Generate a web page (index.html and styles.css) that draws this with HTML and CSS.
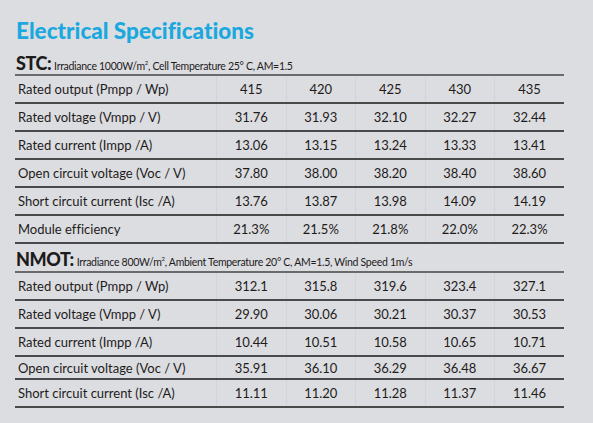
FILE: index.html
```html
<!DOCTYPE html>
<html lang="en">
<head>
  <meta charset="UTF-8" />
  <title>Electrical Specifications</title>
  <link rel="stylesheet" href="styles.css">
</head>
<body>
  <h1 class="title">Electrical Specifications</h1>

  <div class="cond"><b>STC:</b> <span>Irradiance 1000W/m<sup>2</sup>, Cell Temperature 25° C, AM=1.5</span></div>
  <table class="spec">
    <tr><td>Rated output (Pmpp / Wp)</td><td>415</td><td>420</td><td>425</td><td>430</td><td>435</td></tr>
    <tr><td>Rated voltage (Vmpp / V)</td><td>31.76</td><td>31.93</td><td>32.10</td><td>32.27</td><td>32.44</td></tr>
    <tr><td>Rated current (Impp /A)</td><td>13.06</td><td>13.15</td><td>13.24</td><td>13.33</td><td>13.41</td></tr>
    <tr><td>Open circuit voltage (Voc / V)</td><td>37.80</td><td>38.00</td><td>38.20</td><td>38.40</td><td>38.60</td></tr>
    <tr><td>Short circuit current (Isc /A)</td><td>13.76</td><td>13.87</td><td>13.98</td><td>14.09</td><td>14.19</td></tr>
    <tr><td>Module efficiency</td><td>21.3%</td><td>21.5%</td><td>21.8%</td><td>22.0%</td><td>22.3%</td></tr>
  </table>

  <div class="cond cond-2"><b>NMOT:</b> <span>Irradiance 800W/m<sup>2</sup>, Ambient Temperature 20° C, AM=1.5, Wind Speed 1m/s</span></div>
  <table class="spec">
    <tr><td>Rated output (Pmpp / Wp)</td><td>312.1</td><td>315.8</td><td>319.6</td><td>323.4</td><td>327.1</td></tr>
    <tr><td>Rated voltage (Vmpp / V)</td><td>29.90</td><td>30.06</td><td>30.21</td><td>30.37</td><td>30.53</td></tr>
    <tr><td>Rated current (Impp /A)</td><td>10.44</td><td>10.51</td><td>10.58</td><td>10.65</td><td>10.71</td></tr>
    <tr class="short"><td>Open circuit voltage (Voc / V)</td><td>35.91</td><td>36.10</td><td>36.29</td><td>36.48</td><td>36.67</td></tr>
    <tr><td>Short circuit current (Isc /A)</td><td>11.11</td><td>11.20</td><td>11.28</td><td>11.37</td><td>11.46</td></tr>
  </table>
</body>
</html>
```

FILE: styles.css
```css
body {
  margin: 0;
  padding: 17px 29px 0 15px;
  background: #dcdde0;
  font-family: Lato, 'Liberation Sans', sans-serif;
  font-variant-ligatures: none;
  color: #1e1b1c;
}

.title {
  margin: 0;
  color: #1ba8df;
  font-size: 22.5px;
  font-weight: 900;
  line-height: 28px;
  padding-left: 1px;
}

.cond {
  height: 26px;
  margin-top: 3px;
  font-size: 10.5px;
  line-height: 31px;
  border-bottom: 2px solid #6a6a6a;
  white-space: nowrap;
}

.cond span {
  letter-spacing: -0.3px;
}

.cond b {
  font-size: 18px;
  font-weight: 900;
  letter-spacing: -0.4px;
  padding-left: 1px;
}

.cond sup {
  font-size: 6px;
  vertical-align: 5px;
  line-height: 0;
}

.cond-2 {
  margin-top: 0;
  height: 27px;
}

.spec {
  width: 549px;
  border-collapse: collapse;
  table-layout: fixed;
  font-size: 13px;
}

.spec td {
  height: 26px;
  padding: 0;
  border-bottom: 2px solid #4a4a4a;
  border-left: 1px solid #d3d4d7;
  text-align: center;
}

.spec td:first-child {
  width: 198px;
  border-left: none;
  text-align: left;
  padding-left: 3px;
}

.spec tr.short td {
  height: 21px;
}
```
